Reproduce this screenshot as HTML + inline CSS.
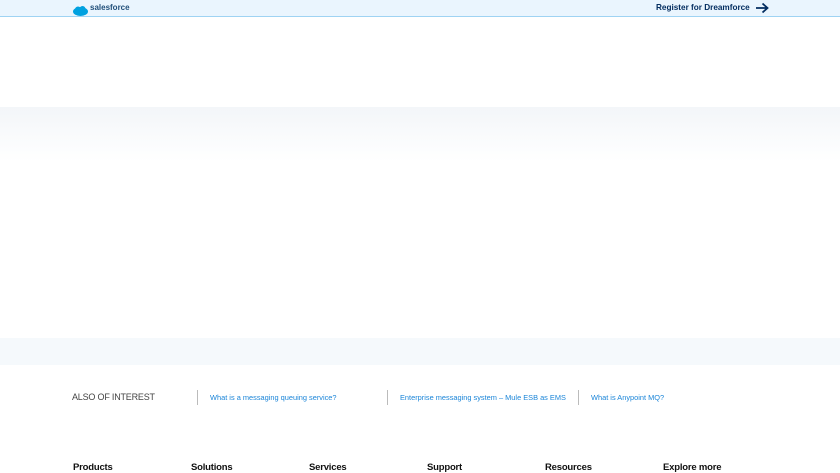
<!DOCTYPE html>
<html><head><meta charset="utf-8"><style>
html,body{margin:0;padding:0;width:840px;height:472px;overflow:hidden;background:#fff;font-family:"Liberation Sans",sans-serif;}
.hdr{position:absolute;left:0;top:0;width:840px;height:16px;background:#eaf5fe;border-bottom:1px solid #9fd3f3;}
.logo{position:absolute;left:73px;top:3px;}
.logo span{position:absolute;left:17px;top:0px;font-size:8px;font-weight:bold;color:#1f4e79;white-space:nowrap;}
.reg{position:absolute;left:656px;top:3px;font-size:8.2px;font-weight:bold;color:#032d60;white-space:nowrap;}
.band1{position:absolute;left:0;top:107px;width:840px;height:55px;background:linear-gradient(#f3f6f9,#fff);}
.band2{position:absolute;left:0;top:338px;width:840px;height:27px;background:#f5f9fc;}
.also{position:absolute;left:72px;top:392px;font-size:9px;color:#444;letter-spacing:-0.2px;}
.lk{position:absolute;top:393px;font-size:7.4px;color:#1b85d8;white-space:nowrap;}
.sep{position:absolute;top:390px;width:1px;height:15px;background:#bbb;}
.ft{position:absolute;top:462px;font-size:9.5px;color:#111;font-weight:bold;letter-spacing:-0.2px;}
</style></head><body>
<div class="hdr"></div>
<div class="logo"><svg width="15" height="10" viewBox="0 0 15 10"><ellipse cx="7.5" cy="5.5" rx="7.5" ry="4.5" fill="#00a1e0"/><circle cx="5" cy="3.5" r="3" fill="#00a1e0"/><circle cx="9.5" cy="3" r="3" fill="#00a1e0"/></svg><span>salesforce</span></div>
<div class="reg">Register for Dreamforce</div>
<svg style="position:absolute;left:755px;top:2px" width="14" height="12" viewBox="0 0 14 12"><path d="M1 6H12M7.5 1.5L12.5 6L7.5 10.5" stroke="#032d60" stroke-width="1.8" fill="none"/></svg>
<div class="band1"></div>
<div class="band2"></div>
<div class="also">ALSO OF INTEREST</div>
<div class="sep" style="left:197px"></div>
<div class="lk" style="left:210px">What is a messaging queuing service?</div>
<div class="sep" style="left:387px"></div>
<div class="lk" style="left:400px">Enterprise messaging system – Mule ESB as EMS</div>
<div class="sep" style="left:578px"></div>
<div class="lk" style="left:591px">What is Anypoint MQ?</div>
<div class="ft" style="left:73px">Products</div>
<div class="ft" style="left:191px">Solutions</div>
<div class="ft" style="left:309px">Services</div>
<div class="ft" style="left:427px">Support</div>
<div class="ft" style="left:545px">Resources</div>
<div class="ft" style="left:663px">Explore more</div>
</body></html>
